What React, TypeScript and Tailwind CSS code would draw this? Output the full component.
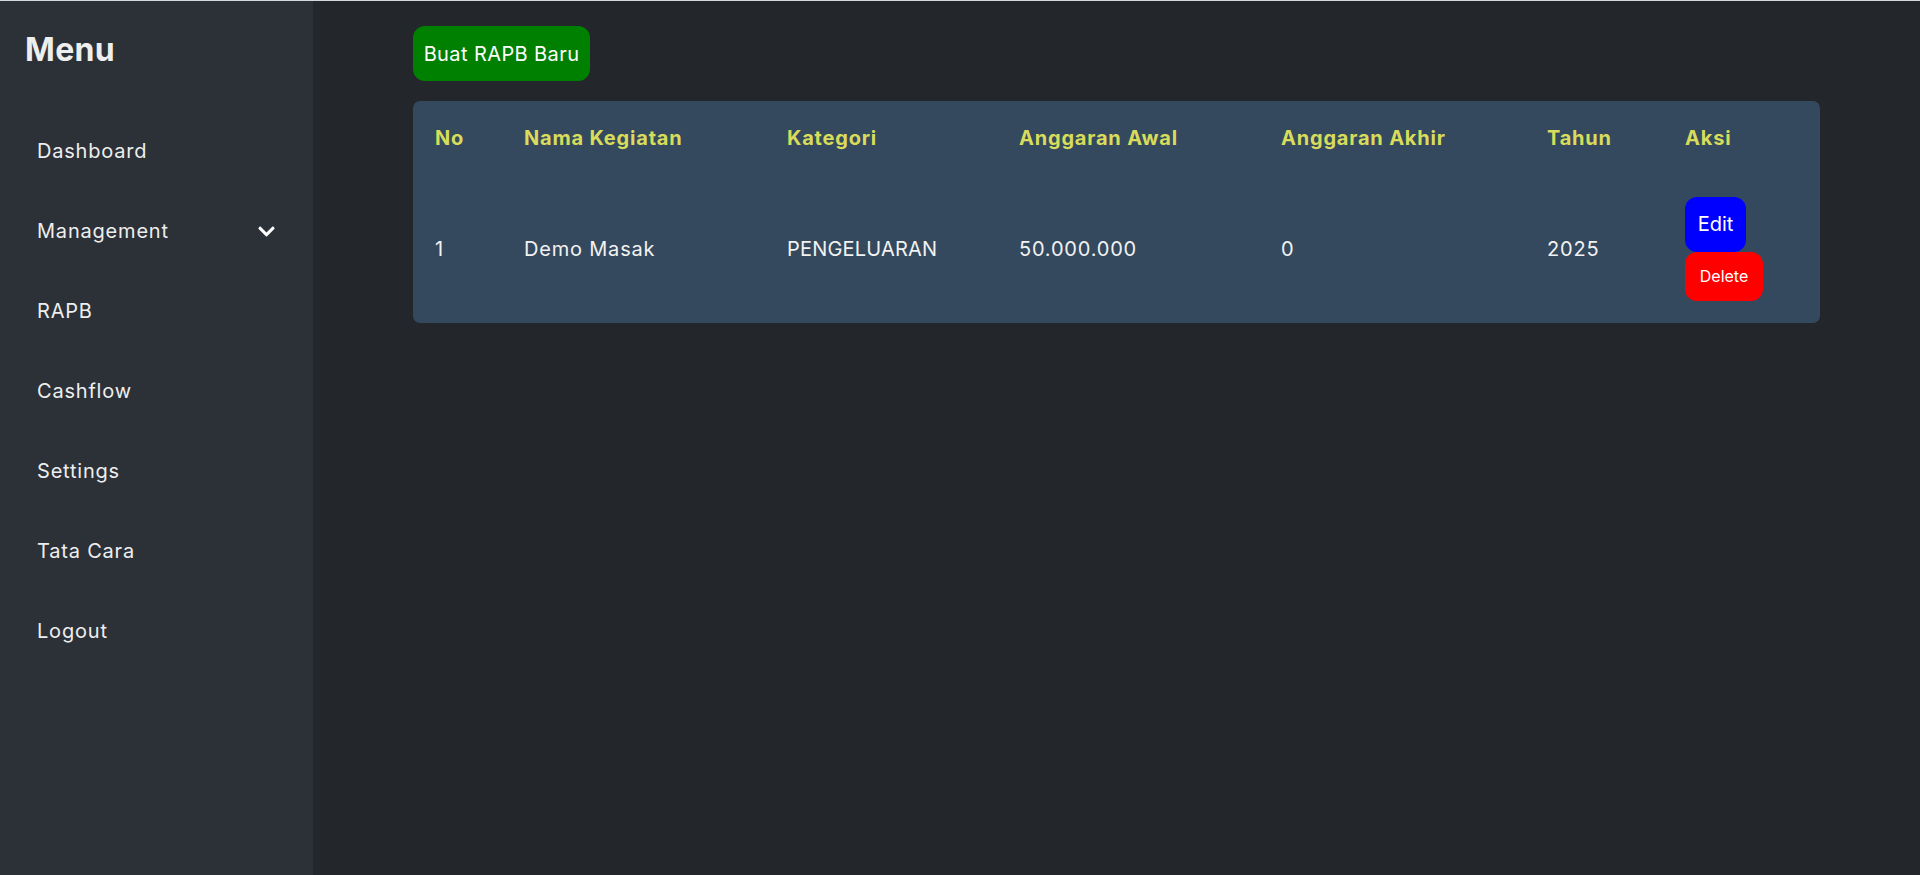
import { FaChevronDown } from 'react-icons/fa'

interface Row {
  no: number
  nama: string
  kategori: string
  awal: string
  akhir: string
  tahun: string
}

const menuItems = ['Dashboard', 'Management', 'RAPB', 'Cashflow', 'Settings', 'Tata Cara', 'Logout']

const columns = [
  { label: 'No', width: 'w-[89px]' },
  { label: 'Nama Kegiatan', width: 'w-[263px]' },
  { label: 'Kategori', width: 'w-[232px]' },
  { label: 'Anggaran Awal', width: 'w-[262px]' },
  { label: 'Anggaran Akhir', width: 'w-[266px]' },
  { label: 'Tahun', width: 'w-[138px]' },
  { label: 'Aksi', width: 'w-[157px]' },
]

const rows: Row[] = [
  { no: 1, nama: 'Demo Masak', kategori: 'PENGELUARAN', awal: '50.000.000', akhir: '0', tahun: '2025' },
]

function Sidebar() {
  return (
    <aside className="flex h-[874px] w-[313px] shrink-0 flex-col bg-[#2c3138] text-[#eeeeee]">
      <h2 className="pl-[25px] pt-[25px] text-[32px] font-bold leading-[48px] tracking-[0.01em]">Menu</h2>
      <nav className="mt-[37px] flex flex-col">
        {menuItems.map(item => (
          <a key={item} href="#" className="flex h-[80px] items-center justify-between px-[37px] text-[20px] tracking-[0.04em]">
            <span>{item}</span>
            {item === 'Management' && <FaChevronDown className="h-[19px] w-[19px] text-white" />}
          </a>
        ))}
      </nav>
    </aside>
  )
}

function RapbTable() {
  return (
    <table className="w-[1407px] table-fixed border-separate border-spacing-0 overflow-hidden rounded-[7px] bg-[#34495e] text-left text-[20px] tracking-[0.04em]">
      <thead>
        <tr className="h-[73px]">
          {columns.map(col => (
            <th key={col.label} className={`${col.width} pl-[22px] align-middle font-bold text-[#d8dc5a]`}>
              {col.label}
            </th>
          ))}
        </tr>
      </thead>
      <tbody>
        {rows.map(row => (
          <tr key={row.no} className="h-[149px] text-[#f2f2f2]">
            <td className="pl-[22px] align-middle">{row.no}</td>
            <td className="pl-[22px] align-middle">{row.nama}</td>
            <td className="pl-[22px] align-middle tracking-[0.01em]">{row.kategori}</td>
            <td className="pl-[22px] align-middle">{row.awal}</td>
            <td className="pl-[22px] align-middle">{row.akhir}</td>
            <td className="pl-[22px] align-middle">{row.tahun}</td>
            <td className="pl-[22px] align-middle">
              <div className="flex flex-col items-start tracking-normal">
                <button className="flex h-[55px] w-[61px] items-center justify-center rounded-[12px] bg-[#0000ff] text-[20px] text-white">
                  Edit
                </button>
                <button className="flex h-[49px] w-[78px] items-center justify-center rounded-[12px] bg-[#ff0000] text-[16px] text-white">
                  Delete
                </button>
              </div>
            </td>
          </tr>
        ))}
      </tbody>
    </table>
  )
}

export default function App() {
  return (
    <div className="flex min-h-[875px] flex-col bg-[#23262b] font-['Inter',sans-serif]">
      <div className="h-px w-full bg-[#d4d7dc]" />
      <div className="flex flex-1">
        <Sidebar />
        <main className="flex-1 px-[100px] pt-[25px]">
          <button className="flex h-[55px] w-[177px] items-center justify-center rounded-[12px] bg-[#008000] text-[20px] tracking-[0.02em] text-white">
            Buat RAPB Baru
          </button>
          <div className="mt-[20px]">
            <RapbTable />
          </div>
        </main>
      </div>
    </div>
  )
}
